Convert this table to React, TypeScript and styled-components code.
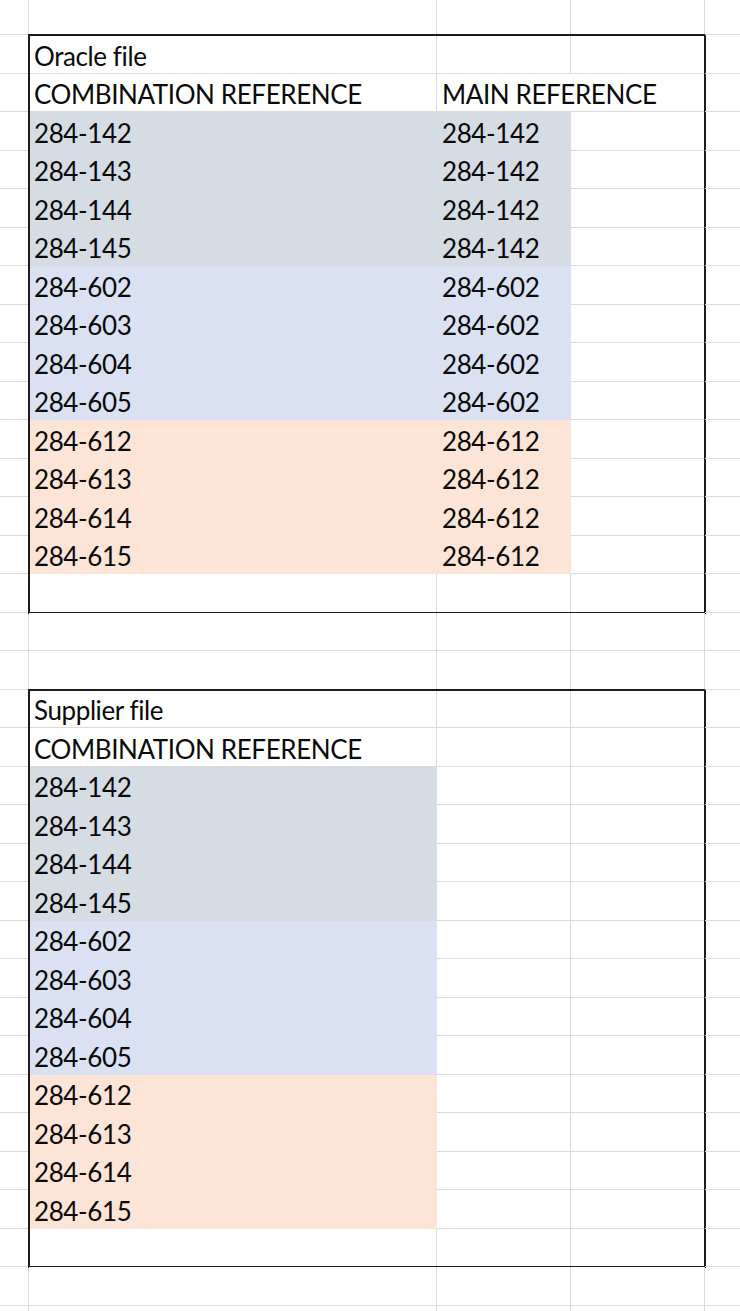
import React from 'react'
import styled, { createGlobalStyle } from 'styled-components'

type Fill = 'gray' | 'blue' | 'peach'

const ROW = 38.5
const GRID = '#dadada'

const fills: Record<Fill, string> = {
  gray: '#d6dce4',
  blue: '#d9e1f2',
  peach: '#fce4d6',
}

const groups: { fill: Fill; main: string; codes: string[] }[] = [
  { fill: 'gray', main: '284-142', codes: ['284-142', '284-143', '284-144', '284-145'] },
  { fill: 'blue', main: '284-602', codes: ['284-602', '284-603', '284-604', '284-605'] },
  { fill: 'peach', main: '284-612', codes: ['284-612', '284-613', '284-614', '284-615'] },
]

const rows = groups.flatMap(g => g.codes.map(code => ({ code, main: g.main, fill: g.fill })))

const GlobalStyle = createGlobalStyle`
  body {
    margin: 0;
    background: #fff;
  }
`

const Sheet = styled.div`
  display: grid;
  grid-template-columns: 29px 676px 1fr;
  height: 1311px;
  overflow: hidden;
  font-family: Lato, 'Open Sans', sans-serif;
  font-size: 26px;
  letter-spacing: -0.4px;
  color: #0a0a0a;
`

const Strip = styled.div`
  display: flex;
  flex-direction: column;
`

const GutterCell = styled.div<{ $h?: number; $edge?: boolean }>`
  flex-shrink: 0;
  height: ${p => p.$h ?? ROW}px;
  border-bottom: 1px solid ${GRID};
  border-right: ${p => (p.$edge ? `1px solid ${GRID}` : 'none')};
  box-sizing: border-box;
`

const Row = styled.div<{ $h?: number }>`
  flex-shrink: 0;
  display: grid;
  grid-template-columns: 408px 134px 134px;
  height: ${p => p.$h ?? ROW}px;
`

const Cell = styled.div<{ $fill?: Fill; $span?: number }>`
  grid-column: span ${p => p.$span ?? 1};
  display: flex;
  align-items: flex-end;
  box-sizing: border-box;
  padding: 0 0 4px 5px;
  line-height: 1;
  white-space: nowrap;
  background: ${p => (p.$fill ? fills[p.$fill] : '#fff')};
  border-right: 1px solid ${p => (p.$fill ? fills[p.$fill] : GRID)};
  border-bottom: 1px solid ${p => (p.$fill ? fills[p.$fill] : GRID)};
`

const Box = styled.div`
  display: flex;
  flex-direction: column;
  outline: 2px solid #1c1c1c;
  outline-offset: -1px;
`

const EmptyRow = ({ h }: { h?: number }) => (
  <Row $h={h}>
    <Cell />
    <Cell />
    <Cell />
  </Row>
)

const Gutter = ({ edge }: { edge?: boolean }) => (
  <Strip>
    <GutterCell $h={35} $edge={edge} />
    {Array.from({ length: 34 }, (_, i) => (
      <GutterCell key={i} $edge={edge} />
    ))}
  </Strip>
)

export default function App() {
  return (
    <>
      <GlobalStyle />
      <Sheet>
        <Gutter edge />
        <Strip>
          <EmptyRow h={35} />

          <Box>
            <Row>
              <Cell>Oracle file</Cell>
              <Cell />
              <Cell />
            </Row>
            <Row>
              <Cell>COMBINATION REFERENCE</Cell>
              <Cell $span={2}>MAIN REFERENCE</Cell>
            </Row>
            {rows.map(r => (
              <Row key={r.code}>
                <Cell $fill={r.fill}>{r.code}</Cell>
                <Cell $fill={r.fill}>{r.main}</Cell>
                <Cell />
              </Row>
            ))}
            <EmptyRow />
          </Box>

          <EmptyRow />
          <EmptyRow />

          <Box>
            <Row>
              <Cell>Supplier file</Cell>
              <Cell />
              <Cell />
            </Row>
            <Row>
              <Cell>COMBINATION REFERENCE</Cell>
              <Cell />
              <Cell />
            </Row>
            {rows.map(r => (
              <Row key={r.code}>
                <Cell $fill={r.fill}>{r.code}</Cell>
                <Cell />
                <Cell />
              </Row>
            ))}
            <EmptyRow />
          </Box>

          <EmptyRow />
          <EmptyRow />
        </Strip>
        <Gutter />
      </Sheet>
    </>
  )
}
